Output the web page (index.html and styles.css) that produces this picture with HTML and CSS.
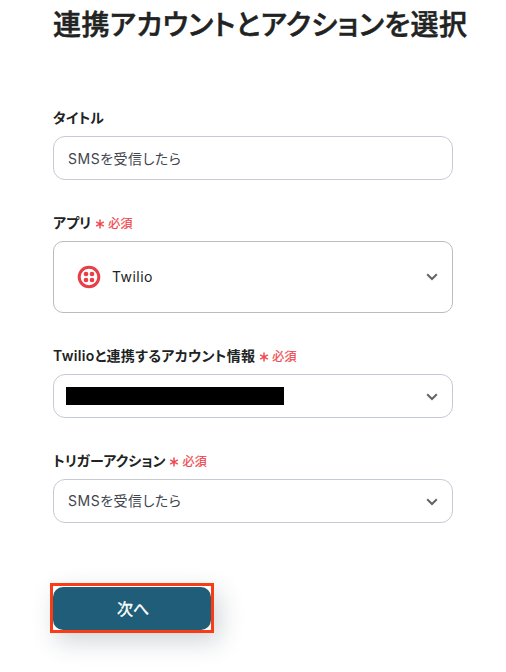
FILE: index.html
```html
<!DOCTYPE html>
<html lang="ja">
<head>
    <meta charset="UTF-8">
    <meta name="viewport" content="width=device-width, initial-scale=1.0">
    <title>連携アカウントとアクションを選択</title>
    <link rel="stylesheet" href="styles.css">
</head>
<body>
    <main class="container">
        <h1 class="title">連携アカウントとアクションを選択</h1>

        <div class="field">
            <div class="label">タイトル</div>
            <div class="box">
                <span class="value">SMSを受信したら</span>
            </div>
        </div>

        <div class="field">
            <div class="label">アプリ
                <span class="required"><svg class="mark" viewBox="0 0 10 10"><path d="M5 .6v8.8M1.2 2.8l7.6 4.4M8.8 2.8L1.2 7.2"/></svg>必須</span>
            </div>
            <div class="box box-app">
                <svg class="logo" viewBox="0 0 24 24">
                    <circle class="ring" cx="12" cy="12" r="9.8"/>
                    <circle cx="9" cy="9" r="2.35"/>
                    <circle cx="15" cy="9" r="2.35"/>
                    <circle cx="9" cy="15" r="2.35"/>
                    <circle cx="15" cy="15" r="2.35"/>
                </svg>
                <span class="app-name">Twilio</span>
                <svg class="arrow" viewBox="0 0 12 8"><path d="M1.2 1.3L6 6l4.8-4.7"/></svg>
            </div>
        </div>

        <div class="field">
            <div class="label label-account">Twilioと連携するアカウント情報
                <span class="required"><svg class="mark" viewBox="0 0 10 10"><path d="M5 .6v8.8M1.2 2.8l7.6 4.4M8.8 2.8L1.2 7.2"/></svg>必須</span>
            </div>
            <div class="box box-select box-account">
                <span class="masked"></span>
                <svg class="arrow" viewBox="0 0 12 8"><path d="M1.2 1.3L6 6l4.8-4.7"/></svg>
            </div>
        </div>

        <div class="field">
            <div class="label">トリガーアクション
                <span class="required"><svg class="mark" viewBox="0 0 10 10"><path d="M5 .6v8.8M1.2 2.8l7.6 4.4M8.8 2.8L1.2 7.2"/></svg>必須</span>
            </div>
            <div class="box box-select">
                <span class="value">SMSを受信したら</span>
                <svg class="arrow" viewBox="0 0 12 8"><path d="M1.2 1.3L6 6l4.8-4.7"/></svg>
            </div>
        </div>

        <div class="highlight">
            <button class="next">次へ</button>
        </div>
    </main>
</body>
</html>
```
FILE: styles.css
```css
* {
    box-sizing: border-box;
}
body {
    min-height: 100vh;
    margin: 0;
    background-color: #fff;
    color: #212323;
    font-family: Inter, "Noto Sans CJK JP", sans-serif;
    font-size: 14px;
    font-feature-settings: "palt";
}
.container {
    width: 400px;
    min-height: 672px;
    margin-left: 53px;
}
.title {
    margin: 0 0 58px;
    font-size: 28px;
    font-weight: 500;
    line-height: 50px;
    letter-spacing: 0.43px;
    white-space: nowrap;
    -webkit-text-stroke: 0.55px #212323;
}
.field {
    margin-bottom: 33px;
}
.label {
    display: flex;
    align-items: center;
    height: 20px;
    margin-bottom: 8px;
    font-weight: 600;
    line-height: 20px;
    letter-spacing: 0.05px;
    white-space: nowrap;
}
.label-account {
    letter-spacing: 0.32px;
}
.required {
    display: flex;
    align-items: center;
    margin-left: 4px;
    padding-top: 1px;
    color: #f04a50;
    font-size: 12px;
    font-weight: 400;
    letter-spacing: 0.28px;
    -webkit-text-stroke: 0.25px #f04a50;
}
.mark {
    width: 10px;
    height: 10px;
    margin-right: 3px;
    fill: none;
    stroke: #f04a50;
    stroke-width: 1.5;
}
.box {
    display: flex;
    align-items: center;
    height: 44px;
    padding: 0 14px;
    border: 1px solid #c5cbd4;
    border-radius: 12px;
}
.box-app {
    height: 72px;
    padding-left: 23px;
    border-color: #bcbcbc;
    border-radius: 10px;
}
.box-account {
    padding-left: 12px;
}
.value {
    color: #41454d;
    letter-spacing: 0.5px;
}
.box-select .value {
    padding-bottom: 2px;
}
.logo {
    width: 24px;
    height: 24px;
    margin-right: 11px;
    fill: #e83e48;
}
.ring {
    fill: none;
    stroke: #e83e48;
    stroke-width: 3;
}
.app-name {
    padding-bottom: 1px;
    letter-spacing: 0.45px;
}
.masked {
    width: 218px;
    height: 18px;
    background-color: #000;
}
.arrow {
    width: 12px;
    height: 8px;
    margin-left: auto;
    fill: none;
    stroke: #646464;
    stroke-width: 2;
}
.box-select .arrow {
    margin-top: 2px;
}
.highlight {
    width: 164px;
    height: 50px;
    margin: 60px 0 0 -3px;
    padding: 1px 0;
    border: 3px solid #fa3c14;
    box-shadow: 6px 9px 24px rgba(30, 50, 70, 0.2);
}
.next {
    display: block;
    width: 158px;
    height: 43px;
    padding: 0 0 2px 2px;
    border: none;
    border-radius: 10px;
    background-color: #1f5d78;
    color: #fff;
    font: inherit;
    font-size: 16px;
    -webkit-text-stroke: 0.4px #fff;
}
```
